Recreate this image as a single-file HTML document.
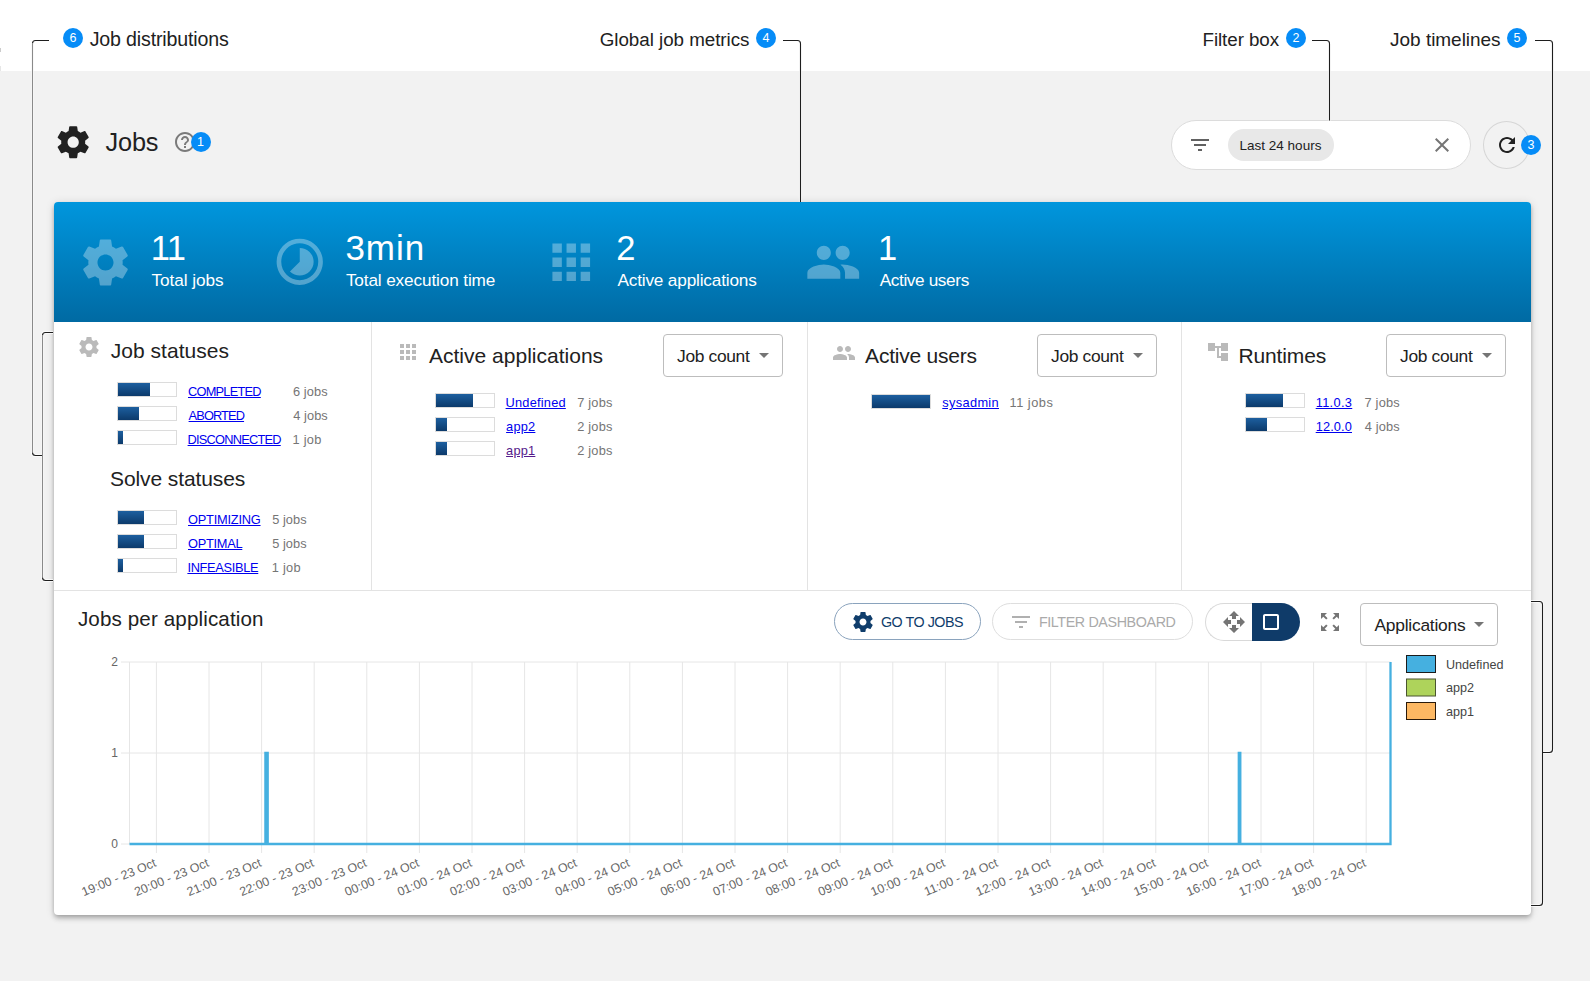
<!DOCTYPE html>
<html><head><meta charset="utf-8"><title>Jobs</title><style>
*{margin:0;padding:0;box-sizing:content-box}
html,body{width:1590px;height:981px;overflow:hidden;background:#f2f2f2;font-family:"Liberation Sans",sans-serif}
.a{position:absolute}
.t{position:absolute;line-height:1;white-space:nowrap}
.badge{position:absolute;border-radius:50%;background:#068cf7;color:#fff;text-align:center;font-family:"Liberation Sans",sans-serif}
.card{background:#fff;border-radius:4px;box-shadow:0 2px 4px -1px rgba(0,0,0,.2),0 4px 5px 0 rgba(0,0,0,.14),0 1px 10px 0 rgba(0,0,0,.12)}
.bar{position:absolute;width:58px;height:13px;border:1px solid #dcdcdc;background:#fff}
.fill{height:13px;background:linear-gradient(#1d5f9f,#0c3a6b)}
</style></head>
<body>
<div class="a" style="left:0px;top:0px;width:1590px;height:71px;background:#fff"></div>
<div class="a" style="left:0px;top:48px;width:1px;height:4px;background:#ccc"></div>
<div class="a" style="left:0px;top:66px;width:1px;height:5px;background:#e6e6e6"></div>
<div class="badge" style="left:63.0px;top:28.3px;width:20px;height:20px;font-size:12.5px;line-height:20px">6</div>
<div class="t " style="left:89.7px;top:30.0px;font-size:19.6px;color:#212121;letter-spacing:-0.16px;">Job distributions</div>
<div class="t " style="left:599.7px;top:31.0px;font-size:18.8px;color:#212121;letter-spacing:-0.03px;">Global job metrics</div>
<div class="badge" style="left:756.0px;top:28.3px;width:20px;height:20px;font-size:12.5px;line-height:20px">4</div>
<div class="t " style="left:1202.5px;top:31.0px;font-size:18.8px;color:#212121;letter-spacing:-0.07px;">Filter box</div>
<div class="badge" style="left:1286.0px;top:28.3px;width:20px;height:20px;font-size:12.5px;line-height:20px">2</div>
<div class="t " style="left:1390.1px;top:30.0px;font-size:19.0px;color:#212121;letter-spacing:-0.03px;">Job timelines</div>
<div class="badge" style="left:1507.0px;top:28.3px;width:20px;height:20px;font-size:12.5px;line-height:20px">5</div>
<svg class="a" style="left:54.3px;top:122.8px;" width="38.4" height="38.4" viewBox="0 0 24 24"><path fill="#212121" d="M19.43 12.98c.04-.32.07-.64.07-.98s-.03-.66-.07-.98l2.11-1.65c.19-.15.24-.42.12-.64l-2-3.46c-.12-.22-.39-.3-.61-.22l-2.49 1c-.52-.4-1.08-.73-1.69-.98l-.38-2.65C14.46 2.18 14.25 2 14 2h-4c-.25 0-.46.18-.49.42l-.38 2.65c-.61.25-1.17.59-1.690.98l-2.49-1c-.23-.09-.49 0-.61.22l-2 3.46c-.13.22-.07.49.12.64l2.11 1.65c-.04.32-.07.65-.07.98s.03.66.07.98l-2.11 1.65c-.19.15-.24.42-.12.64l2 3.46c.12.22.39.3.61.22l2.49-1c.52.4 1.08.73 1.69.98l.38 2.65c.03.24.24.42.49.42h4c.25 0 .46-.18.49-.42l.38-2.65c.61-.25 1.17-.59 1.69-.98l2.49 1c.23.09.49 0 .61-.22l2-3.46c.12-.22.07-.49-.12-.64l-2.11-1.65zM12 15.5c-1.93 0-3.5-1.57-3.5-3.5s1.57-3.5 3.5-3.5 3.5 1.57 3.5 3.5-1.57 3.5-3.5 3.5z"/></svg>
<div class="t " style="left:105.6px;top:130.0px;font-size:25.3px;color:#212121;letter-spacing:-0.20px;">Jobs</div>
<svg class="a" style="left:172.5px;top:130.0px;" width="24" height="24" viewBox="0 0 24 24"><path fill="#7a7a7a" d="M11 18h2v-2h-2v2zm1-16C6.48 2 2 6.48 2 12s4.48 10 10 10 10-4.48 10-10S17.52 2 12 2zm0 18c-4.41 0-8-3.59-8-8s3.59-8 8-8 8 3.59 8 8-3.59 8-8 8zm0-14c-2.21 0-4 1.79-4 4h2c0-1.1.9-2 2-2s2 .9 2 2c0 2-3 1.75-3 5h2c0-2.25 3-2.5 3-5 0-2.21-1.79-4-4-4z"/></svg>
<div class="badge" style="left:190.5px;top:132.0px;width:20px;height:20px;font-size:12.5px;line-height:20px">1</div>
<div class="a" style="left:1171px;top:120px;width:298px;height:48px;border:1px solid #dcdcdc;border-radius:25px;background:#fff"></div>
<svg class="a" style="left:1188.0px;top:133.0px;" width="24" height="24" viewBox="0 0 24 24"><path fill="#616161" d="M10 18h4v-2h-4v2zM3 6v2h18V6H3zm3 7h12v-2H6v2z"/></svg>
<div class="a" style="left:1228px;top:129px;width:106px;height:32px;background:#e8e8e8;border-radius:16px"></div>
<div class="t " style="left:1239.4px;top:139.0px;font-size:13.5px;color:#212121;letter-spacing:0.02px;">Last 24 hours</div>
<svg class="a" style="left:1430.0px;top:133.0px;" width="24" height="24" viewBox="0 0 24 24"><path fill="#757575" d="M19 6.41L17.59 5 12 10.59 6.41 5 5 6.41 10.59 12 5 17.59 6.41 19 12 13.41 17.59 19 19 17.59 13.41 12z"/></svg>
<div class="a" style="left:1483px;top:121px;width:45px;height:46px;border:1px solid #d6d6d6;border-radius:50%"></div>
<svg class="a" style="left:1495.0px;top:133.0px;" width="24" height="24" viewBox="0 0 24 24"><path fill="#212121" d="M17.65 6.35C16.2 4.9 14.21 4 12 4c-4.42 0-7.99 3.58-7.99 8s3.57 8 7.990 8c3.73 0 6.84-2.55 7.73-6h-2.08c-.82 2.33-3.04 4-5.65 4-3.31 0-6-2.69-6-6s2.69-6 6-6c1.66 0 3.14.69 4.22 1.78L13 11h7V4l-2.35 2.35z"/></svg>
<div class="badge" style="left:1521.0px;top:135.0px;width:20px;height:20px;font-size:12.5px;line-height:20px">3</div>
<div class="a card" style="left:54px;top:202px;width:1477px;height:713px"></div>
<div class="a" style="left:54px;top:202px;width:1477px;height:120px;border-radius:4px 4px 0 0;background:linear-gradient(#0096dd,#006aa3)"></div>
<svg class="a" style="left:77.9px;top:234.5px;" width="55" height="55" viewBox="0 0 24 24"><path fill="rgba(255,255,255,0.32)" d="M19.43 12.98c.04-.32.07-.64.07-.98s-.03-.66-.07-.98l2.11-1.65c.19-.15.24-.42.12-.64l-2-3.46c-.12-.22-.39-.3-.61-.22l-2.49 1c-.52-.4-1.08-.73-1.69-.98l-.38-2.65C14.46 2.18 14.25 2 14 2h-4c-.25 0-.46.18-.49.42l-.38 2.65c-.61.25-1.17.59-1.690.98l-2.49-1c-.23-.09-.49 0-.61.22l-2 3.46c-.13.22-.07.49.12.64l2.11 1.65c-.04.32-.07.65-.07.98s.03.66.07.98l-2.11 1.65c-.19.15-.24.42-.12.64l2 3.46c.12.22.39.3.61.22l2.49-1c.52.4 1.08.73 1.69.98l.38 2.65c.03.24.24.42.49.42h4c.25 0 .46-.18.49-.42l.38-2.65c.61-.25 1.17-.59 1.69-.98l2.49 1c.23.09.49 0 .61-.22l2-3.46c.12-.22.07-.49-.12-.64l-2.11-1.65zM12 15.5c-1.93 0-3.5-1.57-3.5-3.5s1.57-3.5 3.5-3.5 3.5 1.57 3.5 3.5-1.57 3.5-3.5 3.5z"/></svg>
<div class="t " style="left:150.7px;top:231.0px;font-size:34.5px;color:#fff;letter-spacing:-0.6px">11</div>
<div class="t " style="left:151.6px;top:272.0px;font-size:17.2px;color:#fff;letter-spacing:-0.08px;">Total jobs</div>
<svg class="a" style="left:272.2px;top:234.2px;" width="55.5" height="55.5" viewBox="0 0 24 24"><path fill="rgba(255,255,255,0.32)" d="M16.24 7.76C15.07 6.59 13.54 6 12 6v6l-4.24 4.24c2.34 2.34 6.14 2.34 8.49 0 2.34-2.34 2.34-6.14-.01-8.48zM12 2C6.48 2 2 6.48 2 12s4.48 10 10 10 10-4.48 10-10S17.52 2 12 2zm0 18c-4.42 0-8-3.58-8-8s3.58-8 8-8 8 3.58 8 8-3.58 8-8 8z"/></svg>
<div class="t " style="left:345.4px;top:230.0px;font-size:35px;color:#fff;letter-spacing:0.97px;">3min</div>
<div class="t " style="left:345.9px;top:272.0px;font-size:17.2px;color:#fff;letter-spacing:-0.13px;">Total execution time</div>
<svg class="a" style="left:542.8px;top:234.1px;" width="56.5" height="56.5" viewBox="0 0 24 24"><path fill="rgba(255,255,255,0.32)" d="M4 8h4V4H4v4zm6 12h4v-4h-4v4zm-6 0h4v-4H4v4zm0-6h4v-4H4v4zm6 0h4v-4h-4v4zm6-10v4h4V4h-4zm-6 4h4V4h-4v4zm6 6h4v-4h-4v4zm0 6h4v-4h-4v4z"/></svg>
<div class="t " style="left:616.3px;top:231.0px;font-size:34.5px;color:#fff;">2</div>
<div class="t " style="left:617.4px;top:272.0px;font-size:17.2px;color:#fff;letter-spacing:-0.16px;">Active applications</div>
<svg class="a" style="left:805.0px;top:233.8px;" width="56.5" height="56.5" viewBox="0 0 24 24"><path fill="rgba(255,255,255,0.32)" d="M16 11c1.66 0 2.99-1.34 2.99-3S17.66 5 16 5c-1.66 0-3 1.34-3 3s1.34 3 3 3zm-8 0c1.66 0 2.99-1.34 2.99-3S9.66 5 8 5C6.34 5 5 6.34 5 8s1.34 3 3 3zm0 2c-2.33 0-7 1.17-7 3.5V19h14v-2.5c0-2.33-4.670-3.5-7-3.5zm8 0c-.29 0-.62.02-.97.05 1.16.84 1.97 1.97 1.97 3.45V19h6v-2.5c0-2.33-4.67-3.5-7-3.5z"/></svg>
<div class="t " style="left:878.0px;top:231.0px;font-size:34.5px;color:#fff;">1</div>
<div class="t " style="left:879.7px;top:272.0px;font-size:17.2px;color:#fff;letter-spacing:-0.37px;">Active users</div>
<div class="a" style="left:371px;top:322px;width:1px;height:268px;background:#e3e3e3"></div>
<div class="a" style="left:807px;top:322px;width:1px;height:268px;background:#e3e3e3"></div>
<div class="a" style="left:1181px;top:322px;width:1px;height:268px;background:#e3e3e3"></div>
<div class="a" style="left:54px;top:590px;width:1477px;height:1px;background:#e3e3e3"></div>
<svg class="a" style="left:77.4px;top:335.0px;" width="24" height="24" viewBox="0 0 24 24"><path fill="#bababa" d="M19.43 12.98c.04-.32.07-.64.07-.98s-.03-.66-.07-.98l2.11-1.65c.19-.15.24-.42.12-.64l-2-3.46c-.12-.22-.39-.3-.61-.22l-2.49 1c-.52-.4-1.08-.73-1.69-.98l-.38-2.65C14.46 2.18 14.25 2 14 2h-4c-.25 0-.46.18-.49.42l-.38 2.65c-.61.25-1.17.59-1.690.98l-2.49-1c-.23-.09-.49 0-.61.22l-2 3.46c-.13.22-.07.49.12.64l2.11 1.65c-.04.32-.07.65-.07.98s.03.66.07.98l-2.11 1.65c-.19.15-.24.42-.12.64l2 3.46c.12.22.39.3.61.22l2.49-1c.52.4 1.08.73 1.69.98l.38 2.65c.03.24.24.42.49.42h4c.25 0 .46-.18.49-.42l.38-2.65c.61-.25 1.17-.59 1.69-.98l2.49 1c.23.09.49 0 .61-.22l2-3.46c.12-.22.07-.49-.12-.64l-2.11-1.65zM12 15.5c-1.93 0-3.5-1.57-3.5-3.5s1.57-3.5 3.5-3.5 3.5 1.57 3.5 3.5-1.57 3.5-3.5 3.5z"/></svg>
<div class="t " style="left:110.7px;top:340.0px;font-size:21px;color:#212121;letter-spacing:0.04px;">Job statuses</div>
<div class="bar" style="left:117px;top:382px"><div class="fill" style="width:32px"></div></div>
<div class="t " style="left:188.0px;top:386.0px;font-size:12.8px;color:#0000ee;letter-spacing:-0.76px;text-decoration:underline;text-underline-offset:0.5px">COMPLETED</div>
<div class="t " style="left:292.9px;top:386.0px;font-size:12.8px;color:#757575;letter-spacing:0.14px;">6 jobs</div>
<div class="bar" style="left:117px;top:406px"><div class="fill" style="width:21px"></div></div>
<div class="t " style="left:188.6px;top:410.0px;font-size:12.8px;color:#0000ee;letter-spacing:-0.88px;text-decoration:underline;text-underline-offset:0.5px">ABORTED</div>
<div class="t " style="left:293.2px;top:410.0px;font-size:12.8px;color:#757575;letter-spacing:0.08px;">4 jobs</div>
<div class="bar" style="left:117px;top:430px"><div class="fill" style="width:5px"></div></div>
<div class="t " style="left:187.6px;top:434.0px;font-size:12.8px;color:#0000ee;letter-spacing:-0.77px;text-decoration:underline;text-underline-offset:0.5px">DISCONNECTED</div>
<div class="t " style="left:292.6px;top:434.0px;font-size:12.8px;color:#757575;letter-spacing:0.25px;">1 job</div>
<div class="t " style="left:110.1px;top:468.0px;font-size:21px;color:#212121;letter-spacing:-0.11px;">Solve statuses</div>
<div class="bar" style="left:117px;top:510px"><div class="fill" style="width:26px"></div></div>
<div class="t " style="left:188.0px;top:514.0px;font-size:12.8px;color:#0000ee;letter-spacing:-0.21px;text-decoration:underline;text-underline-offset:0.5px">OPTIMIZING</div>
<div class="t " style="left:272.2px;top:514.0px;font-size:12.8px;color:#757575;letter-spacing:0.04px;">5 jobs</div>
<div class="bar" style="left:117px;top:534px"><div class="fill" style="width:26px"></div></div>
<div class="t " style="left:188.0px;top:538.0px;font-size:12.8px;color:#0000ee;letter-spacing:-0.27px;text-decoration:underline;text-underline-offset:0.5px">OPTIMAL</div>
<div class="t " style="left:272.2px;top:538.0px;font-size:12.8px;color:#757575;letter-spacing:0.04px;">5 jobs</div>
<div class="bar" style="left:117px;top:558px"><div class="fill" style="width:5px"></div></div>
<div class="t " style="left:187.4px;top:562.0px;font-size:12.8px;color:#0000ee;letter-spacing:-0.31px;text-decoration:underline;text-underline-offset:0.5px">INFEASIBLE</div>
<div class="t " style="left:271.8px;top:562.0px;font-size:12.8px;color:#757575;letter-spacing:0.25px;">1 job</div>
<svg class="a" style="left:396.0px;top:340.0px;" width="24" height="24" viewBox="0 0 24 24"><path fill="#bababa" d="M4 8h4V4H4v4zm6 12h4v-4h-4v4zm-6 0h4v-4H4v4zm0-6h4v-4H4v4zm6 0h4v-4h-4v4zm6-10v4h4V4h-4zm-6 4h4V4h-4v4zm6 6h4v-4h-4v4zm0 6h4v-4h-4v4z"/></svg>
<div class="t " style="left:429.0px;top:345.0px;font-size:21px;color:#212121;letter-spacing:0.01px;">Active applications</div>
<div class="a" style="left:663px;top:334px;width:118px;height:41px;border:1px solid #bdbdbd;border-radius:4px;background:#fff"></div>
<div class="t " style="left:677.1px;top:348.0px;font-size:17.4px;color:#212121;letter-spacing:-0.34px;">Job count</div>
<svg class="a" style="left:751.5px;top:343.0px;" width="24" height="24" viewBox="0 0 24 24"><path fill="#757575" d="M7 10l5 5 5-5z"/></svg>
<div class="bar" style="left:435px;top:393px"><div class="fill" style="width:37px"></div></div>
<div class="t " style="left:505.6px;top:397.0px;font-size:12.8px;color:#0000ee;letter-spacing:0.21px;text-decoration:underline;text-underline-offset:0.5px">Undefined</div>
<div class="t " style="left:577.2px;top:397.0px;font-size:12.8px;color:#757575;letter-spacing:0.22px;">7 jobs</div>
<div class="bar" style="left:435px;top:417px"><div class="fill" style="width:11px"></div></div>
<div class="t " style="left:506.1px;top:421.0px;font-size:12.8px;color:#0000ee;letter-spacing:0.20px;text-decoration:underline;text-underline-offset:0.5px">app2</div>
<div class="t " style="left:577.2px;top:421.0px;font-size:12.8px;color:#757575;letter-spacing:0.22px;">2 jobs</div>
<div class="bar" style="left:435px;top:441px"><div class="fill" style="width:11px"></div></div>
<div class="t " style="left:506.1px;top:445.0px;font-size:12.8px;color:#551a8b;letter-spacing:0.20px;text-decoration:underline;text-underline-offset:0.5px">app1</div>
<div class="t " style="left:577.2px;top:445.0px;font-size:12.8px;color:#757575;letter-spacing:0.22px;">2 jobs</div>
<svg class="a" style="left:832.0px;top:340.5px;" width="24" height="24" viewBox="0 0 24 24"><path fill="#bababa" d="M16 11c1.66 0 2.99-1.34 2.99-3S17.66 5 16 5c-1.66 0-3 1.34-3 3s1.34 3 3 3zm-8 0c1.66 0 2.99-1.34 2.99-3S9.66 5 8 5C6.34 5 5 6.34 5 8s1.34 3 3 3zm0 2c-2.33 0-7 1.17-7 3.5V19h14v-2.5c0-2.33-4.670-3.5-7-3.5zm8 0c-.29 0-.62.02-.97.05 1.16.84 1.97 1.97 1.97 3.45V19h6v-2.5c0-2.33-4.67-3.5-7-3.5z"/></svg>
<div class="t " style="left:865.1px;top:345.0px;font-size:21px;color:#212121;letter-spacing:-0.22px;">Active users</div>
<div class="a" style="left:1037px;top:334px;width:118px;height:41px;border:1px solid #bdbdbd;border-radius:4px;background:#fff"></div>
<div class="t " style="left:1051.1px;top:348.0px;font-size:17.4px;color:#212121;letter-spacing:-0.34px;">Job count</div>
<svg class="a" style="left:1125.5px;top:343.0px;" width="24" height="24" viewBox="0 0 24 24"><path fill="#757575" d="M7 10l5 5 5-5z"/></svg>
<div class="bar" style="left:871px;top:393.5px"><div class="fill" style="width:58px"></div></div>
<div class="t " style="left:942.3px;top:397.0px;font-size:12.8px;color:#0000ee;letter-spacing:0.33px;text-decoration:underline;text-underline-offset:0.5px">sysadmin</div>
<div class="t " style="left:1009.6px;top:397.0px;font-size:12.8px;color:#757575;letter-spacing:0.48px;">11 jobs</div>
<svg class="a" style="left:1206.0px;top:340.2px;" width="24" height="24" viewBox="0 0 24 24"><path fill="#bababa" d="M22 11V3h-7v3H9V3H2v8h7V8h2v10h4v3h7v-8h-7v3h-2V8h2v3z"/></svg>
<div class="t " style="left:1238.4px;top:345.0px;font-size:21px;color:#212121;letter-spacing:-0.13px;">Runtimes</div>
<div class="a" style="left:1386px;top:334px;width:118px;height:41px;border:1px solid #bdbdbd;border-radius:4px;background:#fff"></div>
<div class="t " style="left:1400.1px;top:348.0px;font-size:17.4px;color:#212121;letter-spacing:-0.34px;">Job count</div>
<svg class="a" style="left:1474.5px;top:343.0px;" width="24" height="24" viewBox="0 0 24 24"><path fill="#757575" d="M7 10l5 5 5-5z"/></svg>
<div class="bar" style="left:1245px;top:393px"><div class="fill" style="width:37px"></div></div>
<div class="t " style="left:1315.7px;top:397.0px;font-size:12.8px;color:#0000ee;letter-spacing:0.32px;text-decoration:underline;text-underline-offset:0.5px">11.0.3</div>
<div class="t " style="left:1364.5px;top:397.0px;font-size:12.8px;color:#757575;letter-spacing:0.22px;">7 jobs</div>
<div class="bar" style="left:1245px;top:417px"><div class="fill" style="width:21px"></div></div>
<div class="t " style="left:1315.7px;top:421.0px;font-size:12.8px;color:#0000ee;letter-spacing:0.12px;text-decoration:underline;text-underline-offset:0.5px">12.0.0</div>
<div class="t " style="left:1364.8px;top:421.0px;font-size:12.8px;color:#757575;letter-spacing:0.16px;">4 jobs</div>
<div class="t " style="left:77.9px;top:609.0px;font-size:20.6px;color:#212121;letter-spacing:0.13px;">Jobs per application</div>
<div class="a" style="left:834px;top:603px;width:145px;height:35px;border:1px solid #8aa3bd;border-radius:19px"></div>
<svg class="a" style="left:851.0px;top:609.5px;" width="24" height="24" viewBox="0 0 24 24"><path fill="#0f3d6b" d="M19.43 12.98c.04-.32.07-.64.07-.98s-.03-.66-.07-.98l2.11-1.65c.19-.15.24-.42.12-.64l-2-3.46c-.12-.22-.39-.3-.61-.22l-2.49 1c-.52-.4-1.08-.73-1.69-.98l-.38-2.65C14.46 2.18 14.25 2 14 2h-4c-.25 0-.46.18-.49.42l-.38 2.65c-.61.25-1.17.59-1.690.98l-2.49-1c-.23-.09-.49 0-.61.22l-2 3.46c-.13.22-.07.49.12.64l2.11 1.65c-.04.32-.07.65-.07.98s.03.66.07.98l-2.11 1.65c-.19.15-.24.42-.12.64l2 3.46c.12.22.39.3.61.22l2.49-1c.52.4 1.08.73 1.69.98l.38 2.65c.03.24.24.42.49.42h4c.25 0 .46-.18.49-.42l.38-2.65c.61-.25 1.17-.59 1.69-.98l2.49 1c.23.09.49 0 .61-.22l2-3.46c.12-.22.07-.49-.12-.64l-2.11-1.65zM12 15.5c-1.93 0-3.5-1.57-3.5-3.5s1.57-3.5 3.5-3.5 3.5 1.57 3.5 3.5-1.57 3.5-3.5 3.5z"/></svg>
<div class="t " style="left:880.9px;top:615.0px;font-size:14.3px;color:#0f3d6b;letter-spacing:-0.46px;">GO TO JOBS</div>
<div class="a" style="left:992px;top:603px;width:199px;height:35px;border:1px solid #dedede;border-radius:19px"></div>
<svg class="a" style="left:1009.0px;top:609.5px;" width="24" height="24" viewBox="0 0 24 24"><path fill="#b0b0b0" d="M10 18h4v-2h-4v2zM3 6v2h18V6H3zm3 7h12v-2H6v2z"/></svg>
<div class="t " style="left:1038.9px;top:615.0px;font-size:14.3px;color:#aaaaaa;letter-spacing:-0.38px;">FILTER DASHBOARD</div>
<div class="a" style="left:1205px;top:603px;width:60px;height:36px;border:1px solid #d9d9d9;border-right:none;border-radius:19px 0 0 19px"></div>
<div class="a" style="left:1252px;top:603px;width:48px;height:38px;background:#0f3b69;border-radius:0 19px 19px 0"></div>
<svg class="a" style="left:1222.0px;top:610.0px;" width="24" height="24" viewBox="0 0 24 24"><path fill="#757575" d="M10 9h4V6h3l-5-5-5 5h3v3zm-1 1H6V7l-5 5 5 5v-3h3v-4zm14 2l-5-5v3h-3v4h3v3l5-5zm-9 3h-4v3H7l5 5 5-5h-3v-3z"/></svg>
<svg class="a" style="left:1259.0px;top:610.0px;" width="24" height="24" viewBox="0 0 24 24"><path fill="#fff" d="M18 4H6c-1.1 0-2 .9-2 2v12c0 1.1.9 2 2 2h12c1.1 0 2-.9 2-2V6c0-1.1-.9-2-2-2zm0 14H6V6h12v12z"/></svg>
<svg class="a" style="left:1318.0px;top:610.0px;" width="24" height="24" viewBox="0 0 24 24"><path fill="#757575" d="M15 3l2.3 2.3-2.89 2.87 1.42 1.42L18.7 6.7 21 9V3zM3 9l2.3-2.3 2.87 2.89 1.42-1.42L6.7 5.3 9 3H3zm6 12l-2.3-2.3 2.89-2.87-1.42-1.42L5.3 17.3 3 15v6zm12-6l-2.3 2.3-2.87-2.89-1.42 1.42 2.89 2.87L15 21h6z"/></svg>
<div class="a" style="left:1360px;top:603px;width:136px;height:41px;border:1px solid #bdbdbd;border-radius:4px;background:#fff"></div>
<div class="t " style="left:1374.4px;top:617.0px;font-size:17.4px;color:#212121;letter-spacing:-0.23px;">Applications</div>
<svg class="a" style="left:1466.5px;top:612.0px;" width="24" height="24" viewBox="0 0 24 24"><path fill="#757575" d="M7 10l5 5 5-5z"/></svg>
<svg class="a" style="left:0;top:0" width="1590" height="981" viewBox="0 0 1590 981" font-family="Liberation Sans, sans-serif"><g stroke="#e6e6e6" stroke-width="1" fill="none"><line x1="121" y1="662" x2="1390.5" y2="662"/><line x1="121" y1="753" x2="1390.5" y2="753"/><line x1="121" y1="844" x2="1390.5" y2="844"/><line x1="129.5" y1="662" x2="129.5" y2="844"/><line x1="156.4" y1="662" x2="156.4" y2="853"/><line x1="209.0" y1="662" x2="209.0" y2="853"/><line x1="261.6" y1="662" x2="261.6" y2="853"/><line x1="314.2" y1="662" x2="314.2" y2="853"/><line x1="366.8" y1="662" x2="366.8" y2="853"/><line x1="419.4" y1="662" x2="419.4" y2="853"/><line x1="472.0" y1="662" x2="472.0" y2="853"/><line x1="524.6" y1="662" x2="524.6" y2="853"/><line x1="577.2" y1="662" x2="577.2" y2="853"/><line x1="629.8" y1="662" x2="629.8" y2="853"/><line x1="682.4" y1="662" x2="682.4" y2="853"/><line x1="735.0" y1="662" x2="735.0" y2="853"/><line x1="787.6" y1="662" x2="787.6" y2="853"/><line x1="840.2" y1="662" x2="840.2" y2="853"/><line x1="892.8" y1="662" x2="892.8" y2="853"/><line x1="945.4" y1="662" x2="945.4" y2="853"/><line x1="998.0" y1="662" x2="998.0" y2="853"/><line x1="1050.6" y1="662" x2="1050.6" y2="853"/><line x1="1103.2" y1="662" x2="1103.2" y2="853"/><line x1="1155.8" y1="662" x2="1155.8" y2="853"/><line x1="1208.4" y1="662" x2="1208.4" y2="853"/><line x1="1261.0" y1="662" x2="1261.0" y2="853"/><line x1="1313.6" y1="662" x2="1313.6" y2="853"/><line x1="1366.2" y1="662" x2="1366.2" y2="853"/></g><text x="118" y="666.3" text-anchor="end" font-size="12" fill="#666">2</text><text x="118" y="757.3" text-anchor="end" font-size="12" fill="#666">1</text><text x="118" y="848.3" text-anchor="end" font-size="12" fill="#666">0</text><text x="155.4" y="866.3" text-anchor="end" font-size="12.4" letter-spacing="0.05" fill="#666" transform="rotate(-22.5 155.4 862)">19:00 - 23 Oct</text><text x="208.0" y="866.3" text-anchor="end" font-size="12.4" letter-spacing="0.05" fill="#666" transform="rotate(-22.5 208.0 862)">20:00 - 23 Oct</text><text x="260.6" y="866.3" text-anchor="end" font-size="12.4" letter-spacing="0.05" fill="#666" transform="rotate(-22.5 260.6 862)">21:00 - 23 Oct</text><text x="313.2" y="866.3" text-anchor="end" font-size="12.4" letter-spacing="0.05" fill="#666" transform="rotate(-22.5 313.2 862)">22:00 - 23 Oct</text><text x="365.8" y="866.3" text-anchor="end" font-size="12.4" letter-spacing="0.05" fill="#666" transform="rotate(-22.5 365.8 862)">23:00 - 23 Oct</text><text x="418.4" y="866.3" text-anchor="end" font-size="12.4" letter-spacing="0.05" fill="#666" transform="rotate(-22.5 418.4 862)">00:00 - 24 Oct</text><text x="471.0" y="866.3" text-anchor="end" font-size="12.4" letter-spacing="0.05" fill="#666" transform="rotate(-22.5 471.0 862)">01:00 - 24 Oct</text><text x="523.6" y="866.3" text-anchor="end" font-size="12.4" letter-spacing="0.05" fill="#666" transform="rotate(-22.5 523.6 862)">02:00 - 24 Oct</text><text x="576.2" y="866.3" text-anchor="end" font-size="12.4" letter-spacing="0.05" fill="#666" transform="rotate(-22.5 576.2 862)">03:00 - 24 Oct</text><text x="628.8" y="866.3" text-anchor="end" font-size="12.4" letter-spacing="0.05" fill="#666" transform="rotate(-22.5 628.8 862)">04:00 - 24 Oct</text><text x="681.4" y="866.3" text-anchor="end" font-size="12.4" letter-spacing="0.05" fill="#666" transform="rotate(-22.5 681.4 862)">05:00 - 24 Oct</text><text x="734.0" y="866.3" text-anchor="end" font-size="12.4" letter-spacing="0.05" fill="#666" transform="rotate(-22.5 734.0 862)">06:00 - 24 Oct</text><text x="786.6" y="866.3" text-anchor="end" font-size="12.4" letter-spacing="0.05" fill="#666" transform="rotate(-22.5 786.6 862)">07:00 - 24 Oct</text><text x="839.2" y="866.3" text-anchor="end" font-size="12.4" letter-spacing="0.05" fill="#666" transform="rotate(-22.5 839.2 862)">08:00 - 24 Oct</text><text x="891.8" y="866.3" text-anchor="end" font-size="12.4" letter-spacing="0.05" fill="#666" transform="rotate(-22.5 891.8 862)">09:00 - 24 Oct</text><text x="944.4" y="866.3" text-anchor="end" font-size="12.4" letter-spacing="0.05" fill="#666" transform="rotate(-22.5 944.4 862)">10:00 - 24 Oct</text><text x="997.0" y="866.3" text-anchor="end" font-size="12.4" letter-spacing="0.05" fill="#666" transform="rotate(-22.5 997.0 862)">11:00 - 24 Oct</text><text x="1049.6" y="866.3" text-anchor="end" font-size="12.4" letter-spacing="0.05" fill="#666" transform="rotate(-22.5 1049.6 862)">12:00 - 24 Oct</text><text x="1102.2" y="866.3" text-anchor="end" font-size="12.4" letter-spacing="0.05" fill="#666" transform="rotate(-22.5 1102.2 862)">13:00 - 24 Oct</text><text x="1154.8" y="866.3" text-anchor="end" font-size="12.4" letter-spacing="0.05" fill="#666" transform="rotate(-22.5 1154.8 862)">14:00 - 24 Oct</text><text x="1207.4" y="866.3" text-anchor="end" font-size="12.4" letter-spacing="0.05" fill="#666" transform="rotate(-22.5 1207.4 862)">15:00 - 24 Oct</text><text x="1260.0" y="866.3" text-anchor="end" font-size="12.4" letter-spacing="0.05" fill="#666" transform="rotate(-22.5 1260.0 862)">16:00 - 24 Oct</text><text x="1312.6" y="866.3" text-anchor="end" font-size="12.4" letter-spacing="0.05" fill="#666" transform="rotate(-22.5 1312.6 862)">17:00 - 24 Oct</text><text x="1365.2" y="866.3" text-anchor="end" font-size="12.4" letter-spacing="0.05" fill="#666" transform="rotate(-22.5 1365.2 862)">18:00 - 24 Oct</text><path d="M129.5 844 H265.4 V753 H267.7 V844 H1238.8 V753 H1240.3 V844 H1390.5 V662" fill="none" stroke="#45b0e0" stroke-width="2.3" stroke-linejoin="miter"/><rect x="1406.5" y="655.5" width="29" height="17" fill="#45b0e0" stroke="#1b1b1b" stroke-width="1"/><text x="1446" y="668.5" font-size="12.6" fill="#444">Undefined</text><rect x="1406.5" y="679.0" width="29" height="17" fill="#aed35b" stroke="#4a5530" stroke-width="1"/><text x="1446" y="692.0" font-size="12.6" fill="#444">app2</text><rect x="1406.5" y="702.5" width="29" height="17" fill="#fdb863" stroke="#2a1a0a" stroke-width="1"/><text x="1446" y="715.5" font-size="12.6" fill="#444">app1</text></svg>
<svg class="a" style="left:0;top:0;pointer-events:none" width="1590" height="981" viewBox="0 0 1590 981"><g fill="none" stroke="#fff" stroke-opacity="0.7" stroke-width="3.2"><path d="M49 40.5 H35.5 Q32.5 40.5 32.5 43.5 V452.5 Q32.5 455.5 35.5 455.5 H42"/><path d="M53 332.5 H45.5 Q42.5 332.5 42.5 335.5 V577.5 Q42.5 580.5 45.5 580.5 H53"/><path d="M783 40.5 H797.5 Q800.5 40.5 800.5 43.5 V202"/><path d="M1312 40.5 H1326.5 Q1329.5 40.5 1329.5 43.5 V120.5"/><path d="M1535 40.5 H1549.5 Q1552.5 40.5 1552.5 43.5 V749.5 Q1552.5 752.5 1549.5 752.5 H1542.5"/><path d="M1531 601.5 H1539.5 Q1542.5 601.5 1542.5 604.5 V902.5 Q1542.5 905.5 1539.5 905.5 H1531"/></g><g fill="none" stroke-width="1.1"><path d="M49 40.5 H35.5 Q32.5 40.5 32.5 43.5" stroke="#1e1e1e"/><path d="M32.5 43.5 V452.5" stroke="#8a8a8a"/><path d="M32.5 452.5 Q32.5 455.5 35.5 455.5 H42" stroke="#1e1e1e"/><path d="M53 332.5 H45.5 Q42.5 332.5 42.5 335.5" stroke="#1e1e1e"/><path d="M42.5 335.5 V577.5" stroke="#8a8a8a"/><path d="M42.5 577.5 Q42.5 580.5 45.5 580.5 H53" stroke="#1e1e1e"/><path d="M783 40.5 H797.5 Q800.5 40.5 800.5 43.5 V202" stroke="#1e1e1e"/><path d="M1312 40.5 H1326.5 Q1329.5 40.5 1329.5 43.5 V120.5" stroke="#1e1e1e"/><path d="M1535 40.5 H1549.5 Q1552.5 40.5 1552.5 43.5 V749.5 Q1552.5 752.5 1549.5 752.5 H1542.5" stroke="#1e1e1e"/><path d="M1531 601.5 H1539.5 Q1542.5 601.5 1542.5 604.5 V902.5 Q1542.5 905.5 1539.5 905.5 H1531" stroke="#1e1e1e"/></g></svg>
</body></html>
